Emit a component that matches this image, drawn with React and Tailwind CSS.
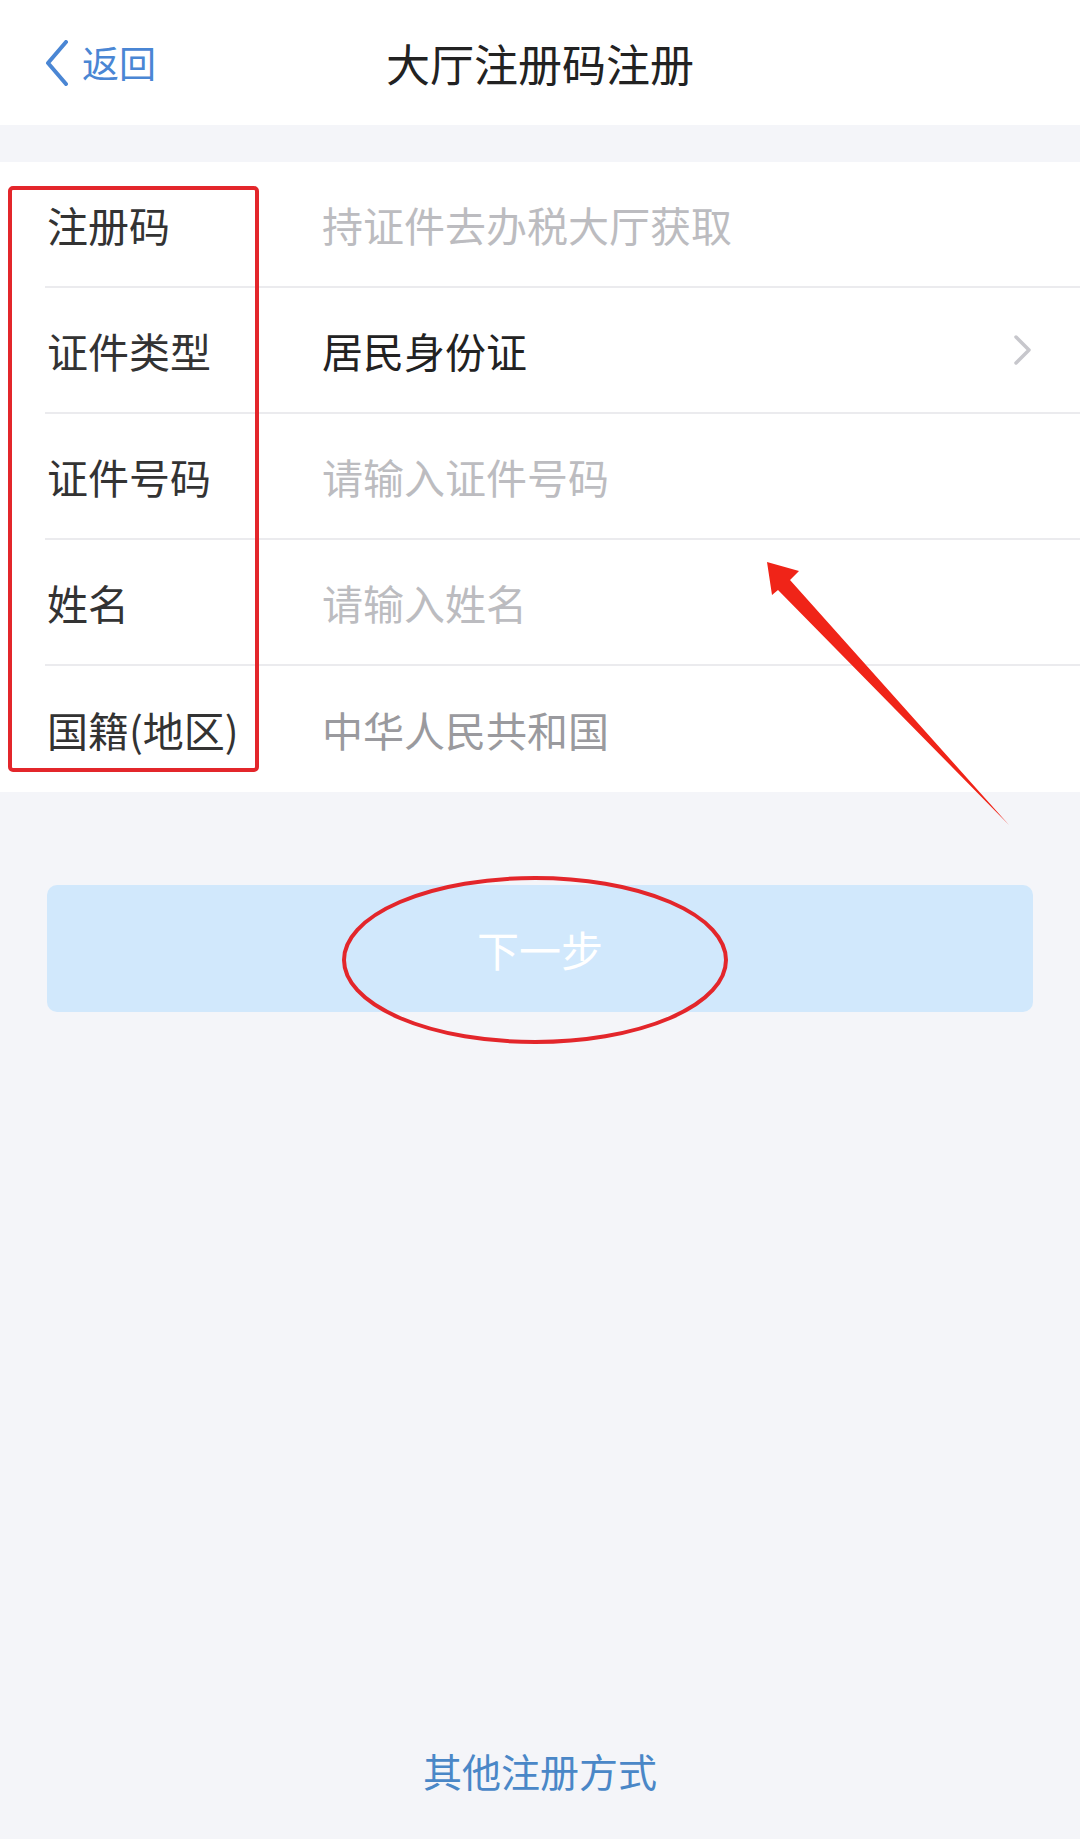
const font = { fontFamily: '"Noto Sans CJK SC", "Noto Sans", sans-serif' };

const rows = [
  { label: "注册码", value: "持证件去办税大厅获取", placeholder: true },
  { label: "证件类型", value: "居民身份证", arrow: true },
  { label: "证件号码", value: "请输入证件号码", placeholder: true },
  { label: "姓名", value: "请输入姓名", placeholder: true },
  { label: "国籍(地区)", value: "中华人民共和国", muted: true },
];

function BackChevron() {
  return (
    <svg width="26" height="46" viewBox="0 0 26 46" fill="none">
      <path
        d="M22 2 L4 23 L22 44"
        stroke="currentColor"
        strokeWidth="4"
        strokeLinecap="round"
        strokeLinejoin="round"
      />
    </svg>
  );
}

function RowChevron() {
  return (
    <svg width="22" height="32" viewBox="0 0 22 32" fill="none">
      <path
        d="M4 3 L17 16 L4 29"
        stroke="currentColor"
        strokeWidth="3.5"
        strokeLinecap="round"
        strokeLinejoin="round"
      />
    </svg>
  );
}

function Annotations() {
  return (
    <svg
      className="pointer-events-none absolute inset-0 h-full w-full"
      viewBox="0 0 1080 1839"
    >
      <rect
        x="10"
        y="188"
        width="247"
        height="582"
        rx="3"
        fill="none"
        stroke="#e3262b"
        strokeWidth="4"
      />
      <ellipse
        cx="535"
        cy="960"
        rx="191"
        ry="82"
        fill="none"
        stroke="#e3262b"
        strokeWidth="4"
      />
      <polygon
        points="767,562 799,571 790,580 1009,825 778,590 772,595"
        fill="#f02418"
      />
    </svg>
  );
}

function App() {
  return (
    <div
      className="relative flex h-[1839px] w-full flex-col bg-[#f4f5f9]"
      style={font}
    >
      <header className="grid h-[125px] grid-cols-[1fr_auto_1fr] items-center bg-white">
        <div className="flex items-center gap-[12px] pl-[44px] text-[#4a86d4]">
          <BackChevron />
          <span className="text-[37px] leading-none">返回</span>
        </div>
        <h1 className="text-[44px] leading-none text-[#222]">大厅注册码注册</h1>
        <div />
      </header>

      <div className="h-[37px]" />

      <div className="bg-white">
        {rows.map((row, i) => (
          <div
            key={row.label}
            className={`ml-[45px] flex h-[126px] items-center ${
              i < rows.length - 1 ? "border-b-[2px] border-[#ebebee]" : ""
            }`}
          >
            <span className="w-[277px] pl-[2px] text-[41px] leading-none text-[#333]">
              {row.label}
            </span>
            <span
              className={`flex-1 text-[41px] leading-none ${
                row.placeholder
                  ? "text-[#bcbcc0]"
                  : row.muted
                  ? "text-[#9a9a9e]"
                  : "text-[#222]"
              }`}
            >
              {row.value}
            </span>
            {row.arrow && (
              <span className="mr-[46px] text-[#c7c7cc]">
                <RowChevron />
              </span>
            )}
          </div>
        ))}
      </div>

      <button className="mx-[47px] mt-[93px] flex h-[127px] items-center justify-center rounded-[10px] bg-[#d1e8fc] text-[42px] leading-none text-white">
        下一步
      </button>

      <div className="flex-1" />

      <p className="pb-[49px] text-center text-[39px] leading-none text-[#4a87c7]">
        其他注册方式
      </p>

      <Annotations />
    </div>
  );
}

export default App;
